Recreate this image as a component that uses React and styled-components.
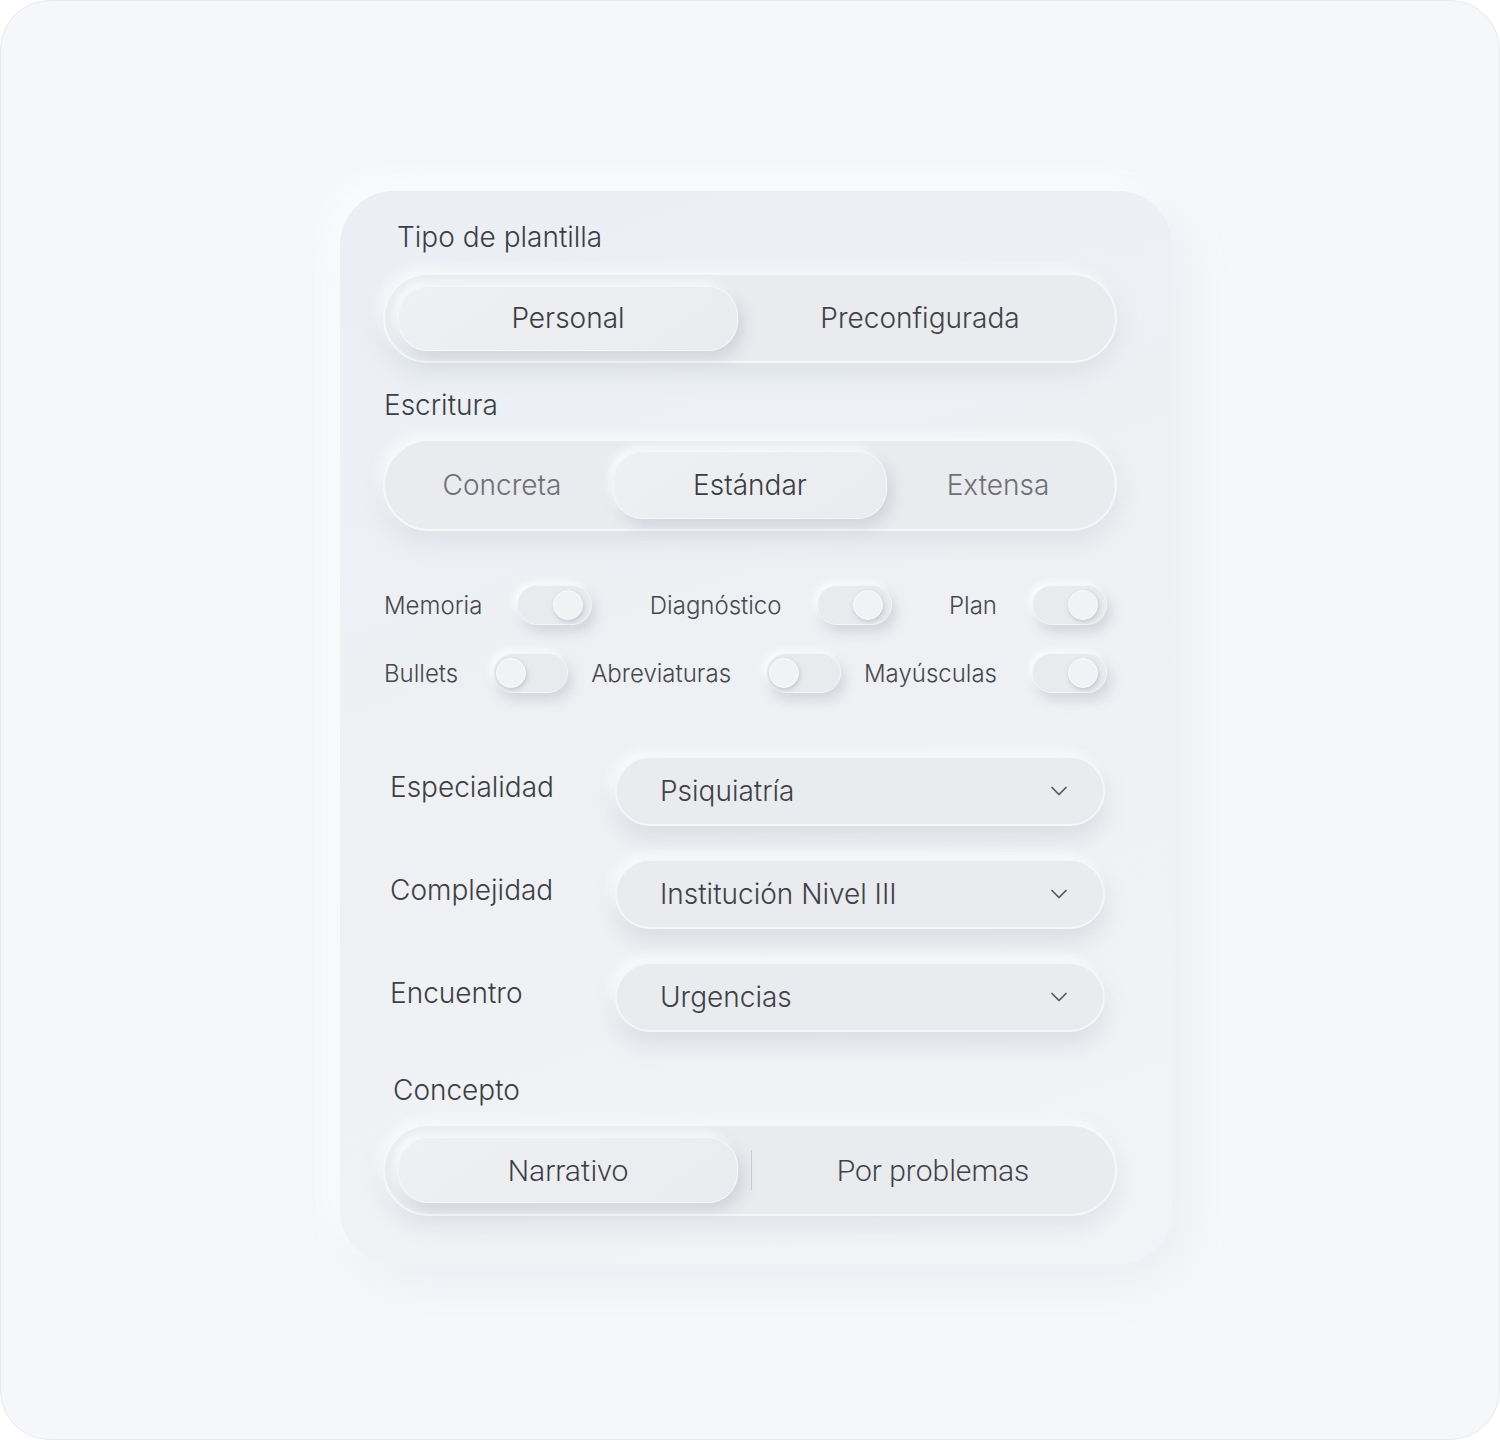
import React from 'react';
import styled, {createGlobalStyle} from 'styled-components';
import {ChevronDown} from 'lucide-react';

const GlobalStyle = createGlobalStyle`
  html, body {
    margin: 0;
    padding: 0;
    background: #ffffff;
  }
  * {
    box-sizing: border-box;
  }
`;

const toggles = [
  [
    {label: 'Memoria', on: true},
    {label: 'Diagnóstico', on: true},
    {label: 'Plan', on: true},
  ],
  [
    {label: 'Bullets', on: false},
    {label: 'Abreviaturas', on: false},
    {label: 'Mayúsculas', on: true},
  ],
];

const selects = [
  {label: 'Especialidad', value: 'Psiquiatría'},
  {label: 'Complejidad', value: 'Institución Nivel III'},
  {label: 'Encuentro', value: 'Urgencias'},
];

const App = () => {
  return (
    <>
      <GlobalStyle/>
      <Frame>
        <Card>
          <Title>Tipo de plantilla</Title>
          <Segmented columns="340px 1fr" height={90} side={13}>
            <ActivePill height={65}>Personal</ActivePill>
            <Option>Preconfigurada</Option>
          </Segmented>

          <SectionLabel>Escritura</SectionLabel>
          <Segmented columns="1fr 274px 1fr" height={92} side={6}>
            <Option muted>Concreta</Option>
            <ActivePill height={68}>Estándar</ActivePill>
            <Option muted>Extensa</Option>
          </Segmented>

          <ToggleBlock>
            {toggles.map((row, i) => (
              <ToggleRow key={i}>
                {row.map(t => (
                  <ToggleItem key={t.label}>
                    <ToggleLabel>{t.label}</ToggleLabel>
                    <Track on={t.on}>
                      <Knob/>
                    </Track>
                  </ToggleItem>
                ))}
              </ToggleRow>
            ))}
          </ToggleBlock>

          <SelectBlock>
            {selects.map(s => (
              <SelectRow key={s.label}>
                <SelectLabel>{s.label}</SelectLabel>
                <SelectBox>
                  <span>{s.value}</span>
                  <ChevronDown size={28} strokeWidth={1.5} color="#55585d"/>
                </SelectBox>
              </SelectRow>
            ))}
          </SelectBlock>

          <ConceptLabel>Concepto</ConceptLabel>
          <Segmented columns="340px 26px 1fr" height={92} side={13} condensed>
            <ActivePill height={66}>Narrativo</ActivePill>
            <Divider/>
            <Option>Por problemas</Option>
          </Segmented>
        </Card>
      </Frame>
    </>
  )
};

export default App

const Frame = styled.div`
  width: 1500px;
  height: 1440px;
  border-radius: 50px;
  border: 1px solid #e8eaee;
  background: #f5f7fa;
  padding: 190px 0 0 339px;
  font-family: "Inter", "Liberation Sans", sans-serif;
  font-weight: 300;
  color: #3c3f44;
`;

const Card = styled.div`
  width: 832px;
  border-radius: 54px;
  padding: 29px 55px 48px 43px;
  background: linear-gradient(160deg, #ebeff5 0%, #eef0f3 45%, #f2f3f6 100%);
  box-shadow: -12px -12px 30px rgba(255, 255, 255, 0.6), 14px 18px 40px rgba(205, 210, 220, 0.22);
`;

const Title = styled.div`
  font-size: 28px;
  line-height: 34px;
  padding-left: 14px;
  margin-bottom: 19px;
`;

const SectionLabel = styled.div`
  font-size: 28px;
  line-height: 34px;
  margin: 25px 0 17px 1px;
`;

const ConceptLabel = styled(SectionLabel)`
  margin: 41px 0 17px 10px;
`;

const Segmented = styled.div`
  display: grid;
  grid-template-columns: ${props => props.columns};
  align-items: center;
  height: ${props => props.height}px;
  padding: 0 ${props => props.side}px;
  border-radius: 46px;
  background: #e9ebee;
  border: 2px solid #f6f7f9;
  box-shadow: 0 10px 22px rgba(165, 172, 185, 0.22), -5px -5px 12px rgba(255, 255, 255, 0.75);
  font-family: ${props => props.condensed ? '"Roboto", "Liberation Sans", sans-serif' : 'inherit'};
  font-size: ${props => props.condensed ? 30 : 28}px;
`;

const Option = styled.div`
  text-align: center;
  color: ${props => props.muted ? '#6d7075' : '#3f4247'};
`;

const ActivePill = styled.div`
  height: ${props => props.height}px;
  border-radius: 30px;
  display: flex;
  align-items: center;
  justify-content: center;
  color: #3a3d42;
  background: linear-gradient(145deg, #eef0f3, #e9ebee);
  border: 1px solid rgba(255, 255, 255, 0.55);
  box-shadow: 5px 7px 14px rgba(165, 170, 182, 0.35), -4px -4px 10px rgba(255, 255, 255, 0.85);
`;

const Divider = styled.div`
  justify-self: center;
  width: 1px;
  height: 40px;
  background: #c9ccd1;
`;

const ToggleBlock = styled.div`
  display: flex;
  flex-direction: column;
  gap: 28px;
  margin-top: 54px;
  padding: 0 10px 0 1px;
`;

const ToggleRow = styled.div`
  display: flex;
  justify-content: space-between;
  align-items: center;
`;

const ToggleItem = styled.div`
  display: flex;
  align-items: center;
  gap: 35px;
`;

const ToggleLabel = styled.span`
  font-size: 24px;
  color: #45484d;
`;

const Track = styled.div`
  width: 75px;
  height: 40px;
  border-radius: 20px;
  display: flex;
  align-items: center;
  justify-content: ${props => props.on ? 'flex-end' : 'flex-start'};
  padding: ${props => props.on ? '0 8px 0 0' : '0 0 0 2px'};
  background: #e8eaed;
  border: 1px solid #f4f5f7;
  box-shadow: 4px 7px 12px rgba(160, 166, 178, 0.35), -3px -3px 7px rgba(255, 255, 255, 0.9);
`;

const Knob = styled.div`
  width: 30px;
  height: 30px;
  border-radius: 50%;
  background: #f1f2f4;
  border: 1px solid #fbfbfc;
  box-shadow: 1px 2px 4px rgba(150, 156, 168, 0.45);
`;

const SelectBlock = styled.div`
  display: flex;
  flex-direction: column;
  gap: 33px;
  margin-top: 63px;
`;

const SelectRow = styled.div`
  display: flex;
  align-items: center;
  padding-left: 7px;
`;

const SelectLabel = styled.div`
  width: 225px;
  font-size: 28px;
  margin-top: -8px;
`;

const SelectBox = styled.div`
  width: 490px;
  height: 70px;
  border-radius: 35px;
  display: flex;
  align-items: center;
  justify-content: space-between;
  padding: 0 30px 0 43px;
  font-size: 28px;
  color: #3f4247;
  background: #e9ebee;
  border: 2px solid #f5f6f8;
  box-shadow: 0 12px 22px rgba(160, 166, 178, 0.26), -5px -5px 12px rgba(255, 255, 255, 0.8);
`;
